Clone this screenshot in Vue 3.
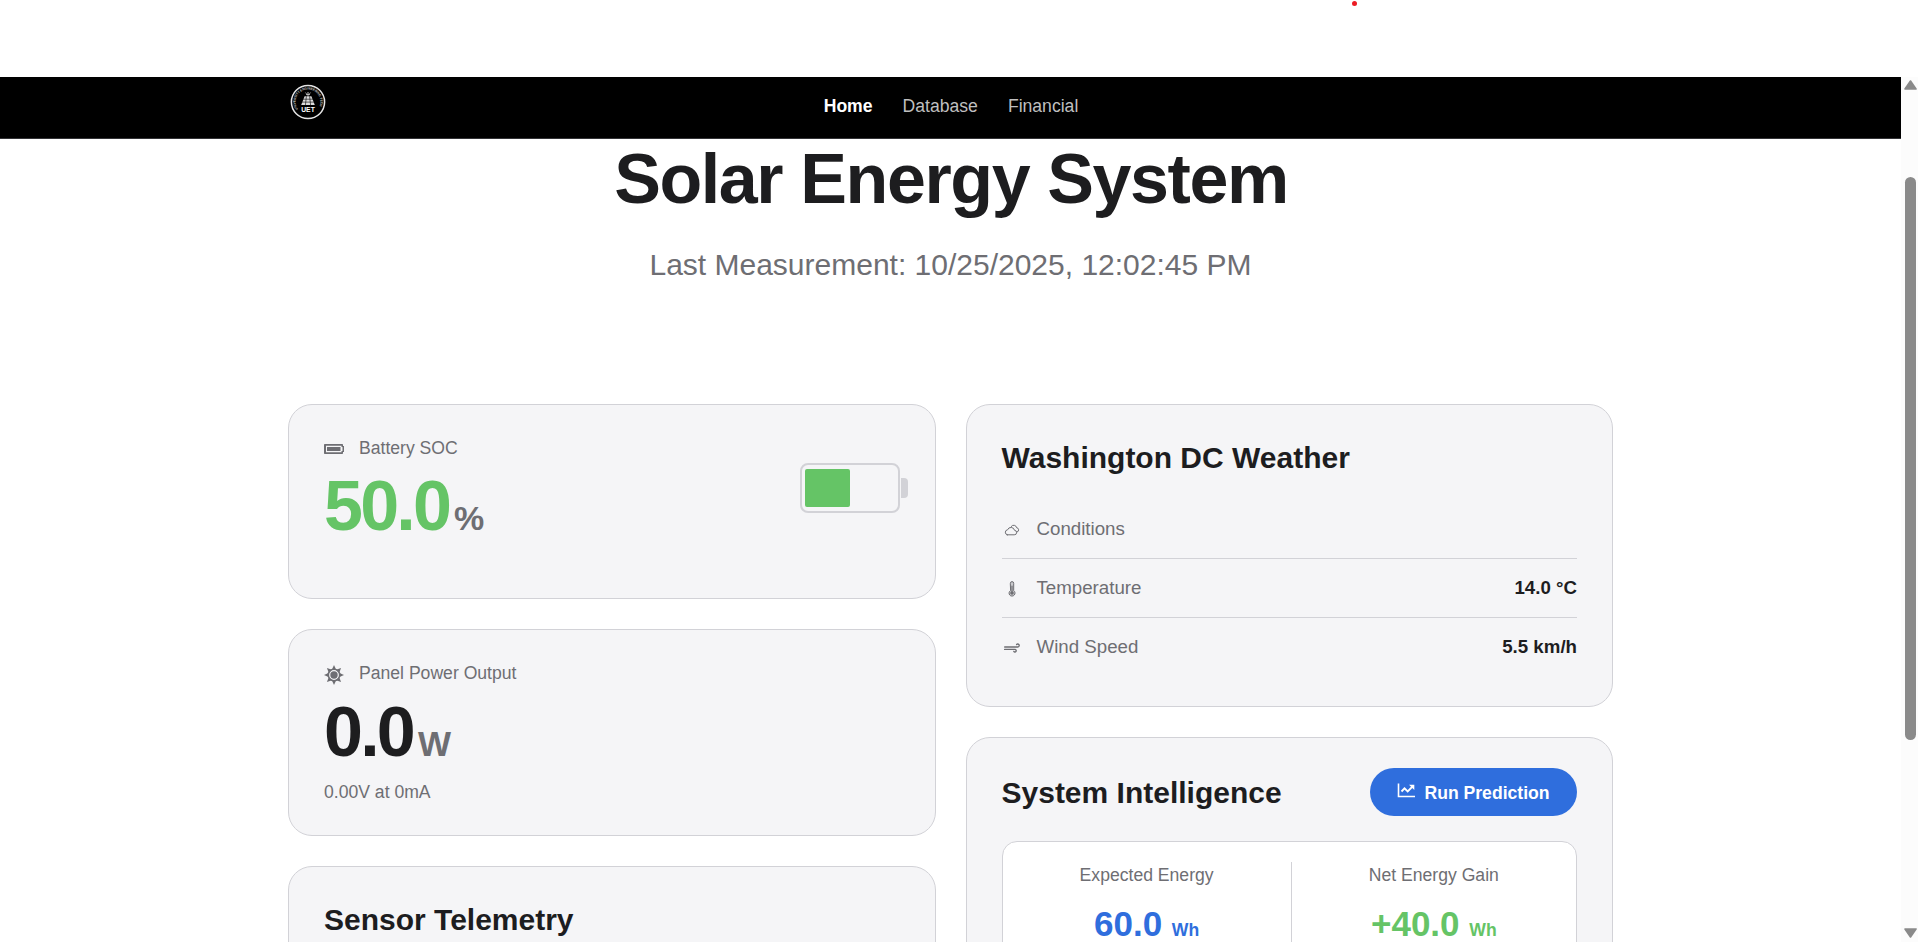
<script setup>
const links = ['Home', 'Database', 'Financial']
const weather = [
  { icon: 'clouds', label: 'Conditions', value: '' },
  { icon: 'thermometer', label: 'Temperature', value: '14.0 °C' },
  { icon: 'wind', label: 'Wind Speed', value: '5.5 km/h' },
]
const results = [
  { label: 'Expected Energy', value: '60.0', tone: 'blue' },
  { label: 'Net Energy Gain', value: '+40.0', tone: 'green' },
]
const soc = 50
const rays = [0, 45, 90, 135, 180, 225, 270, 315]
</script>

<template>
  <div class="window">
    <span class="dot"></span>
    <div class="viewport">
      <div class="page">
        <nav class="nav">
          <div class="nav-inner">
            <svg class="logo" viewBox="0 0 36 36">
              <circle cx="18" cy="18" r="16.6" fill="none" stroke="#e4e4e4" stroke-width="1.5" />
              <path id="ring" d="M8 25.2A12.4 12.4 0 1 1 28 25.2" fill="none" />
              <text class="ring-text"><textPath href="#ring" textLength="51" lengthAdjust="spacingAndGlyphs">UNIVERSITY ENGINEERING TECH</textPath></text>
              <path d="M14.6 12.2h6.8l3.4 8.9H11.2z" fill="#dcdcdc" />
              <path d="M12.6 15.2h10.8M11.7 18.1h12.6M16.4 12.2l-1 9M19.6 12.2l1 9" stroke="#000" stroke-width=".6" />
              <path d="M16 10.6h4M18 8v3.8M15.5 8.6l1 1.2M20.5 8.6l-1 1.2" stroke="#ccc" stroke-width=".9" />
              <text class="logo-text" x="18" y="27.8">UET</text>
            </svg>
            <div class="links">
              <a v-for="(l, i) in links" :key="l" :class="{ active: i === 0 }">{{ l }}</a>
            </div>
          </div>
        </nav>

        <header class="hero">
          <h1>Solar Energy System</h1>
          <p>Last Measurement: 10/25/2025, 12:02:45 PM</p>
        </header>

        <main class="grid">
          <div class="col">
            <section class="card soc">
              <div>
                <div class="label">
                  <svg viewBox="0 0 20 20">
                    <path d="M1 5h17v2h2v6h-2v2H1z" fill="none" />
                    <path fill-rule="evenodd" d="M1 5h17.2c.5 0 .8.3.8.8V7h1v6h-1v1.200c0 .5-.3.8-.8.8H1c-.6 0-1-.4-1-1V6c0-.6.4-1 1-1zM2 6.700v6.600h15.500V12h1V8h-1V6.700z" fill="#6e6e73" />
                    <rect x="3" y="8" width="13.500" height="4" fill="#6e6e73" />
                  </svg>
                  <span>Battery SOC</span>
                </div>
                <div class="big green">50.0<span class="unit">%</span></div>
              </div>
              <div class="battery"><div class="fill" :style="{ width: soc + '%' }"></div></div>
            </section>

            <section class="card power">
              <div class="label">
                <svg viewBox="0 0 20 20" fill="#6e6e73">
                  <path v-for="r in rays" :key="r" d="M10 0l2.300 5H7.700z" :transform="`rotate(${r} 10 10)`" />
                  <circle cx="10" cy="10" r="5.700" fill="none" stroke="#6e6e73" stroke-width="1.600" />
                  <circle cx="10" cy="10" r="3.700" />
                </svg>
                <span>Panel Power Output</span>
              </div>
              <div class="big">0.0<span class="unit">W</span></div>
              <div class="detail">0.00V at 0mA</div>
            </section>

            <section class="card sensor">
              <h2>Sensor Telemetry</h2>
            </section>
          </div>

          <div class="col">
            <section class="card weather">
              <h2>Washington DC Weather</h2>
              <div class="rows">
                <div v-for="w in weather" :key="w.label" class="row">
                  <svg viewBox="0 0 16 16" fill="none" stroke="#6e6e73" stroke-linecap="round" stroke-linejoin="round">
                    <g v-if="w.icon === 'clouds'" stroke-width="1">
                      <path d="M3.200 12.800h7a2.250 2.250 0 0 0 .3-4.500A3.600 3.600 0 0 0 3.600 7.800a2.550 2.550 0 0 0-.4 5z" />
                      <path d="M7.200 4.500a3 3 0 0 1 5.400 1.200 2.250 2.250 0 0 1 .4 4.400" />
                    </g>
                    <g v-else-if="w.icon === 'thermometer'">
                      <path d="M6.300 2.300a1.700 1.700 0 0 1 3.400 0v7.300a3 3 0 1 1-3.400 0z" stroke-width="1" fill="#c9c9cd" />
                      <path d="M8 5v7" stroke-width="1.200" />
                      <circle cx="8" cy="12" r="1.800" fill="#6e6e73" stroke="none" />
                    </g>
                    <g v-else stroke-width="1.300">
                      <path d="M.6 7h13.200a1.500 1.500 0 1 0-1.200-2.500M.6 9.400h10.400a1.300 1.300 0 1 1-1.200 2" />
                    </g>
                  </svg>
                  <span class="name">{{ w.label }}</span>
                  <span class="value">{{ w.value }}</span>
                </div>
              </div>
            </section>

            <section class="card intel">
              <div class="head">
                <h2>System Intelligence</h2>
                <button class="run">
                  <svg viewBox="0 0 18 18" fill="none" stroke="#fff">
                    <path d="M1.500 1.500v13H18" stroke-width="1.600" />
                    <path d="M4.500 9.500l3-3.200 3.200 3.200 4.500-4.700" stroke-width="1.900" />
                    <path d="M12 2.800h5.300v5.200z" fill="#fff" stroke="none" />
                  </svg>
                  <span>Run Prediction</span>
                </button>
              </div>
              <div class="box">
                <template v-for="(r, i) in results" :key="r.label">
                  <div v-if="i" class="divider"></div>
                  <div class="result">
                    <div class="rlabel">{{ r.label }}</div>
                    <div class="rvalue" :class="r.tone">{{ r.value }} <small>Wh</small></div>
                  </div>
                </template>
              </div>
            </section>
          </div>
        </main>
      </div>

      <div class="scrollbar">
        <svg class="arrow" viewBox="0 0 13 10"><path d="M6.5 1L12 9H1z" fill="#8a8a8a" stroke="#8a8a8a" stroke-width="1.6" stroke-linejoin="round" /></svg>
        <div class="thumb"></div>
        <svg class="arrow down" viewBox="0 0 13 10"><path d="M6.5 9L12 1H1z" fill="#8a8a8a" stroke="#8a8a8a" stroke-width="1.6" stroke-linejoin="round" /></svg>
      </div>
    </div>
  </div>
</template>

<style>
body { background: #fff; overflow: hidden; }
</style>

<style scoped>
* { box-sizing: border-box; margin: 0; padding: 0; }
.window {
  position: relative;
  width: 1918px;
  height: 942px;
  padding-top: 77px;
  overflow: hidden;
  background: #fff;
  color: #1d1d1f;
  font-family: "Liberation Sans", Arial, sans-serif;
  font-size: 17.6px;
}
.dot { position: absolute; left: 1352px; top: 1px; width: 5px; height: 5px; border-radius: 50%; background: #ec1c24; }
.viewport { display: flex; height: 865px; }
.page { width: 1901px; height: 865px; overflow: hidden; }
.nav { height: 62px; background: #000; border-bottom: 1px solid #333336; }
.nav-inner { position: relative; width: 1325px; height: 61px; margin: 0 auto; display: flex; justify-content: center; align-items: center; }
.logo { position: absolute; left: 2px; top: 7px; width: 36px; height: 36px; }
.ring-text { font-size: 3.4px; font-weight: 700; fill: #c4c4c4; }
.logo-text { font-size: 6.8px; font-weight: 700; fill: #fff; text-anchor: middle; }
.links { display: flex; gap: 30px; line-height: 20px; padding: 0 0 3px 1px; }
.links a { color: #bfbfbf; }
.links .active { color: #fff; font-weight: 700; }
.hero { padding-top: 5px; height: 265px; text-align: center; }
h1 { font-size: 70px; line-height: 70px; letter-spacing: -1.4px; font-weight: 700; padding-left: 1px; }
.hero p { margin-top: 33px; font-size: 30px; line-height: 36px; color: #6e6e73; }
.grid { width: 1325px; margin: 0 auto; display: grid; grid-template-columns: 1fr 1fr; gap: 30px; }
.col { display: flex; flex-direction: column; gap: 30px; }
.card { border: 1px solid #d2d2d7; border-radius: 24px; background: #f5f5f7; padding: 30px 35px; }
.soc { height: 195px; display: flex; justify-content: space-between; }
.power { height: 207px; }
.sensor { height: 300px; padding-top: 35px; }
.weather { height: 303px; padding-top: 35px; }
.intel { height: 500px; }
h2 { font-size: 30px; line-height: 36px; font-weight: 700; }
.label { display: flex; align-items: center; gap: 15px; height: 26px; color: #6e6e73; line-height: 26px; }
.label svg { width: 20px; height: 20px; margin-top: 2px; }
.power .label svg { margin-top: 4px; }
.big { margin-top: 3px; font-size: 70px; line-height: 84px; font-weight: 700; letter-spacing: -2.8px; }
.power .big { margin-top: 4px; }
.unit { margin-left: 5px; font-size: 35px; line-height: 1; color: #6e6e73; }
.soc .unit { font-size: 34px; }
.green { color: #65c466; }
.blue { color: #2f6edd; }
.detail { margin-top: 6px; line-height: 24px; color: #6e6e73; }
.battery { position: relative; width: 100px; height: 50px; margin-top: 28px; padding: 4px 3px; border: 2px solid #d2d2d7; border-radius: 8px; }
.battery::after { content: ""; position: absolute; right: -10px; top: 13px; width: 7px; height: 20px; border-radius: 0 4px 4px 0; background: #d2d2d7; }
.fill { height: 100%; border-radius: 2px; background: #65c466; }
.rows { margin-top: 24px; }
.row { display: flex; align-items: center; height: 59px; border-bottom: 1px solid #d2d2d7; font-size: 18.7px; line-height: 26px; }
.row:last-child { height: 57px; border-bottom: 0; }
.row svg { width: 16px; height: 16px; margin: 2px 17px 0 2px; }
.name { color: #6e6e73; }
.value { margin-left: auto; font-weight: 700; }
.head { display: flex; justify-content: space-between; align-items: center; height: 48px; }
.head h2 { padding-top: 1px; }
.run { display: flex; align-items: center; justify-content: center; gap: 9px; width: 207px; height: 48px; border: 0; border-radius: 24px; background: #2f6edd; color: #fff; font: 700 17.6px/24px "Liberation Sans", Arial, sans-serif; }
.run svg { width: 18px; height: 18px; margin-top: -3px; }
.run span { padding-top: 1px; }
.box { display: flex; justify-content: space-evenly; height: 200px; margin-top: 25px; padding: 20px 0; border: 1px solid #d2d2d7; border-radius: 15px; background: #fff; }
.divider { width: 1px; background: #d2d2d7; }
.result { text-align: center; }
.rlabel { line-height: 27px; color: #6e6e73; }
.rvalue { margin-top: 14px; font-size: 35px; line-height: 42px; font-weight: 700; }
.rvalue small { font-size: 17.6px; }
.scrollbar { display: flex; flex-direction: column; align-items: center; width: 17px; height: 865px; padding: 3px 0 4px 2px; background: #fcfcfc; }
.arrow { width: 13px; height: 10px; }
.thumb { width: 11px; height: 563px; margin-top: 87px; border-radius: 6px; background: #8a8a8a; }
.down { margin-top: auto; }
</style>
